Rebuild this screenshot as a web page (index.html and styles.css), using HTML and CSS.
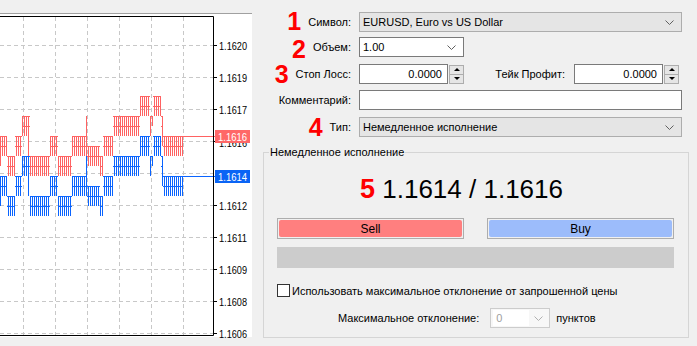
FILE: index.html
```html
<!DOCTYPE html>
<html lang="ru">
<head>
    <meta charset="UTF-8">
    <title>Ордер</title>
    <link rel="stylesheet" href="styles.css">
</head>
<body>
<div class="screen">
    <!-- тиковый график -->
    <div class="chart">
        <svg width="262" height="346" viewBox="0 0 262 346">
            <defs>
                <pattern id="pr" width="2" height="10" y="6" patternUnits="userSpaceOnUse">
                    <rect width="1" height="10" fill="#ff6262"/>
                    <rect width="2" height="1" fill="#ff6262"/>
                </pattern>
                <pattern id="pb" width="2" height="10" y="6" patternUnits="userSpaceOnUse">
                    <rect width="1" height="10" fill="#0a64ff"/>
                    <rect width="2" height="1" fill="#0a64ff"/>
                </pattern>
                <g id="ticks">
                    <rect x="0" y="136" width="7" height="20"/>
                    <rect x="7" y="156" width="8" height="20"/>
                    <rect x="15" y="136" width="7" height="20"/>
                    <rect x="22" y="116" width="8" height="20"/>
                    <rect x="30" y="156" width="20" height="20"/>
                    <rect x="50" y="136" width="8" height="20"/>
                    <rect x="58" y="156" width="14" height="20"/>
                    <rect x="72" y="136" width="15" height="20"/>
                    <rect x="87" y="146" width="13" height="20"/>
                    <rect x="100" y="156" width="3" height="20"/>
                    <rect x="103" y="136" width="10" height="20"/>
                    <rect x="113" y="116" width="27" height="20"/>
                    <rect x="140" y="96" width="10" height="20"/>
                    <rect x="150" y="116" width="3" height="10"/>
                    <rect x="153" y="96" width="8" height="20"/>
                    <rect x="161" y="116" width="2" height="20"/>
                    <rect x="163" y="136" width="20" height="20"/>
                </g>
                <g id="joins">
                    <rect x="0" y="156" width="1" height="10"/>
                    <rect x="28" y="136" width="1" height="20"/>
                    <rect x="86" y="116" width="1" height="20"/>
                    <rect x="150" y="126" width="1" height="10"/>
                    <rect x="162" y="136" width="1" height="10"/>
                </g>
            </defs>

            <rect width="262" height="346" fill="#f0f0f0"/>
            <rect x="0" y="14" width="252" height="323" fill="#fff"/>
            <rect x="0" y="13" width="252" height="1" fill="#a0a0a0"/>

            <path d="M0 45.5H213M0 77.5H213M0 109.5H213M0 141.5H213M0 173.5H213M0 205.5H213M0 237.5H213M0 269.5H213M0 301.5H213M0 333.5H213" stroke="#c8c8c8" stroke-dasharray="4 3"/>
            <path d="M23.5 17V335M55.5 17V335M87.5 17V335M119.5 17V335M151.5 17V335M183.5 17V335" stroke="#c8c8c8" stroke-dasharray="4 3"/>

            <use href="#ticks" fill="url(#pr)"/>
            <use href="#ticks" y="40" fill="url(#pb)"/>
            <use href="#joins" fill="#ff6262"/>
            <use href="#joins" y="40" fill="#0a64ff"/>
            <rect x="183" y="136" width="32" height="1" fill="#ff6262"/>
            <rect x="183" y="176" width="32" height="1" fill="#0a64ff"/>

            <path d="M0 16.5H213.5V335.5H0" stroke="#000" fill="none"/>
            <path d="M213 45.5h4M213 77.5h4M213 109.5h4M213 141.5h4M213 205.5h4M213 237.5h4M213 269.5h4M213 301.5h4M213 333.5h4" stroke="#000"/>

            <g class="axis">
                <text x="219" y="50" textLength="28" lengthAdjust="spacingAndGlyphs">1.1620</text>
                <text x="219" y="82" textLength="28" lengthAdjust="spacingAndGlyphs">1.1619</text>
                <text x="219" y="114" textLength="28" lengthAdjust="spacingAndGlyphs">1.1617</text>
                <text x="219" y="147" textLength="28" lengthAdjust="spacingAndGlyphs">1.1616</text>
                <text x="219" y="210" textLength="28" lengthAdjust="spacingAndGlyphs">1.1612</text>
                <text x="219" y="242" textLength="28" lengthAdjust="spacingAndGlyphs">1.1611</text>
                <text x="219" y="274" textLength="28" lengthAdjust="spacingAndGlyphs">1.1609</text>
                <text x="219" y="306" textLength="28" lengthAdjust="spacingAndGlyphs">1.1608</text>
                <text x="219" y="338" textLength="28" lengthAdjust="spacingAndGlyphs">1.1606</text>
            </g>

            <rect x="215" y="130" width="35" height="13" fill="#ff6868"/>
            <text class="tag" x="218" y="141" textLength="29" lengthAdjust="spacingAndGlyphs">1.1616</text>
            <rect x="215" y="170" width="35" height="13" fill="#0a64f5"/>
            <text class="tag" x="218" y="181" textLength="29" lengthAdjust="spacingAndGlyphs">1.1614</text>
        </svg>
    </div>

    <!-- форма ордера -->
    <div class="panel">
        <div class="row r1">
            <div class="lbl"><span class="num">1</span><span>Символ:</span></div>
            <div class="combo gray wide">
                <span>EURUSD, Euro vs US Dollar</span>
                <svg class="chev" width="9" height="5"><polyline points="0.5,0.5 4.5,4.5 8.5,0.5"/></svg>
            </div>
        </div>

        <div class="row r2">
            <div class="lbl"><span class="num">2</span><span>Объем:</span></div>
            <div class="combo volume">
                <span>1.00</span>
                <svg class="chev" width="9" height="5"><polyline points="0.5,0.5 4.5,4.5 8.5,0.5"/></svg>
            </div>
        </div>

        <div class="row r3">
            <div class="lbl"><span class="num">3</span><span>Стоп Лосс:</span></div>
            <div class="edit num-edit">0.0000</div>
            <div class="spin"><span class="up"></span><span class="down"></span></div>
            <div class="lbl2">Тейк Профит:</div>
            <div class="edit num-edit">0.0000</div>
            <div class="spin"><span class="up"></span><span class="down"></span></div>
        </div>

        <div class="row r4">
            <div class="lbl"><span>Комментарий:</span></div>
            <div class="edit wide"></div>
        </div>

        <div class="row r5">
            <div class="lbl"><span class="num">4</span><span>Тип:</span></div>
            <div class="combo gray wide">
                <span>Немедленное исполнение</span>
                <svg class="chev" width="9" height="5"><polyline points="0.5,0.5 4.5,4.5 8.5,0.5"/></svg>
            </div>
        </div>

        <fieldset class="group">
            <legend>Немедленное исполнение</legend>
            <div class="quote"><span class="num">5</span> 1.1614 / 1.1616</div>
            <div class="trade">
                <div class="btn sell"><span>Sell</span></div>
                <div class="btn buy"><span>Buy</span></div>
            </div>
            <div class="progress"></div>
            <div class="check"><span class="box"></span>Использовать максимальное отклонение от запрошенной цены</div>
            <div class="dev">
                <span>Максимальное отклонение:</span>
                <div class="combo off">
                    <span class="val">0</span>
                    <svg class="chev" width="9" height="5"><polyline points="0.5,0.5 4.5,4.5 8.5,0.5"/></svg>
                </div>
                <span>пунктов</span>
            </div>
        </fieldset>
    </div>
</div>
</body>
</html>
```

FILE: styles.css
```css
body {
    margin: 0;
    background: #f0f0f0;
    font-family: "Liberation Sans", Arial, sans-serif;
    font-size: 11px;
    color: #000;
}
.screen {
    display: flex;
    width: 697px;
    height: 346px;
    overflow: hidden;
    background: #f0f0f0;
}
.chart {
    width: 262px;
    flex: none;
}
.chart svg {
    display: block;
}
.axis text {
    font-family: "Liberation Sans", Arial, sans-serif;
    font-size: 11px;
    fill: #000;
}
.tag {
    font-family: "Liberation Sans", Arial, sans-serif;
    font-size: 11px;
    fill: #fff;
}
.panel {
    width: 435px;
    flex: none;
    padding-top: 12px;
    box-sizing: border-box;
}
.row {
    display: flex;
    align-items: center;
    height: 20px;
}
.r2 { margin-top: 5px; }
.r3 { margin-top: 7px; }
.r4 { margin-top: 6px; }
.r5 { margin-top: 7px; }
.lbl {
    width: 89px;
    flex: none;
    display: flex;
    justify-content: flex-end;
    align-items: center;
    gap: 7px;
    margin-right: 8px;
    white-space: nowrap;
}
.num {
    color: #ff0000;
    font-weight: bold;
    font-size: 25px;
    line-height: 20px;
}
.r1 .num {
    margin-bottom: 3px;
}
.r2 .num {
    margin-top: 3px;
}
.combo {
    display: flex;
    align-items: center;
    justify-content: space-between;
    height: 20px;
    box-sizing: border-box;
    padding: 0 7px 0 3px;
    border: 1px solid #7a7a7a;
    background: #fff;
}
.combo.gray {
    background: #e5e5e5;
    border-color: #adadad;
}
.wide {
    width: 323px;
}
.volume {
    width: 105px;
}
.chev {
    display: block;
}
.chev polyline {
    fill: none;
    stroke: #606060;
    stroke-width: 1;
}
.edit {
    height: 20px;
    box-sizing: border-box;
    border: 1px solid #7a7a7a;
    background: #fff;
}
.num-edit {
    width: 89px;
    text-align: right;
    padding-right: 5px;
    line-height: 18px;
}
.spin {
    width: 15px;
    height: 19px;
    box-sizing: border-box;
    margin-left: 1px;
    border: 1px solid #adadad;
    background: #e5e5e5;
    display: flex;
    flex-direction: column;
}
.spin span {
    flex: 1;
    display: flex;
    align-items: center;
    justify-content: center;
}
.spin .up {
    border-bottom: 1px solid #adadad;
}
.spin .up::before {
    content: "";
    border-left: 3px solid transparent;
    border-right: 3px solid transparent;
    border-bottom: 3px solid #000;
}
.spin .down::before {
    content: "";
    border-left: 3px solid transparent;
    border-right: 3px solid transparent;
    border-top: 3px solid #000;
}
.lbl2 {
    flex: 1;
    text-align: right;
    margin-right: 9px;
    white-space: nowrap;
}
.r3 .spin:last-child {
    margin-right: 18px;
}
.group {
    width: 426px;
    box-sizing: border-box;
    margin: 9px 0 0 1px;
    padding: 0 14px 9px 13px;
    border: 1px solid #d5d5d5;
}
.group legend {
    margin-left: -8px;
    padding: 0 1px;
}
.quote {
    margin-top: 16px;
    padding-left: 83px;
    font-size: 26px;
    line-height: 30px;
    white-space: nowrap;
}
.quote .num {
    font-size: 27px;
    line-height: 30px;
}
.trade {
    display: flex;
    justify-content: space-between;
    margin-top: 14px;
}
.btn {
    width: 187px;
    height: 21px;
    box-sizing: border-box;
    border: 1px solid #adadad;
    padding: 1px;
}
.btn span {
    display: flex;
    align-items: center;
    justify-content: center;
    height: 100%;
    border-radius: 2px;
    font-size: 12px;
}
.sell span {
    background: #ff7f7f;
}
.buy span {
    background: #9cbcfb;
}
.progress {
    margin-top: 8px;
    height: 21px;
    background: #cccccc;
}
.check {
    display: flex;
    align-items: center;
    margin-top: 16px;
    height: 13px;
    white-space: nowrap;
}
.box {
    width: 13px;
    height: 13px;
    box-sizing: border-box;
    border: 1px solid #333;
    background: #fff;
    margin-right: 2px;
}
.dev {
    display: flex;
    align-items: center;
    margin-top: 11px;
    padding-left: 61px;
    height: 20px;
    white-space: nowrap;
}
.combo.off {
    width: 60px;
    margin: 0 6px 0 11px;
    border-color: #cccccc;
    background: #f7f7f7;
    padding: 0 6px 0 2px;
}
.off .val {
    width: 36px;
    line-height: 16px;
    padding-left: 3px;
    box-sizing: border-box;
    background: #fff;
    color: #a0a0a0;
}
.off .chev polyline {
    stroke: #b0b0b0;
}
```
